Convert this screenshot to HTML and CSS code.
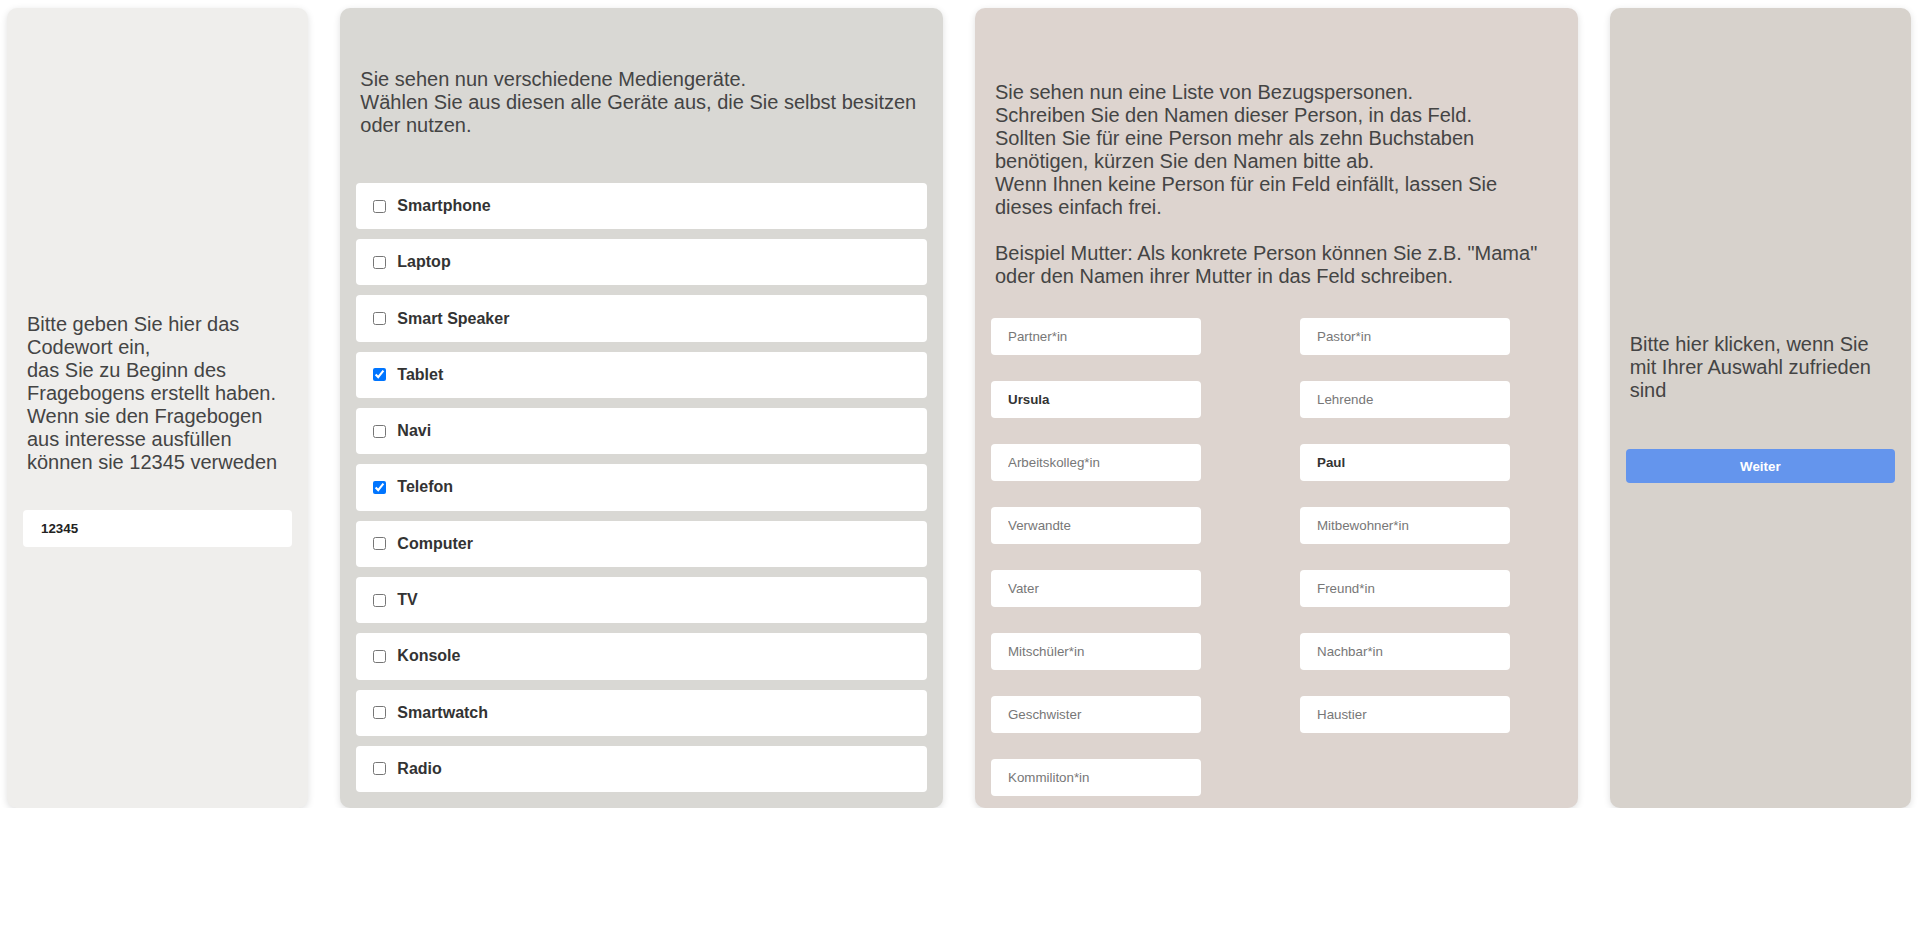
FILE: index.html
```html
<!DOCTYPE html>
<html lang="de">
<head>
<meta charset="utf-8">
<title>Fragebogen</title>
<link rel="stylesheet" href="styles.css">
</head>
<body>
<div class="board">
  <section class="card card-code">
    <p class="prompt">Bitte geben Sie hier das Codewort ein,<br>das Sie zu Beginn des Fragebogens erstellt haben.<br>Wenn sie den Fragebogen aus interesse ausfüllen können sie 12345 verweden</p>
    <input class="field field-code" type="text" value="12345">
  </section>

  <section class="card card-devices">
    <p class="prompt">Sie sehen nun verschiedene Mediengeräte.<br>Wählen Sie aus diesen alle Geräte aus, die Sie selbst besitzen oder nutzen.</p>
    <div class="device-list">
      <label class="device"><input type="checkbox">Smartphone</label>
      <label class="device"><input type="checkbox">Laptop</label>
      <label class="device"><input type="checkbox">Smart Speaker</label>
      <label class="device"><input type="checkbox" checked>Tablet</label>
      <label class="device"><input type="checkbox">Navi</label>
      <label class="device"><input type="checkbox" checked>Telefon</label>
      <label class="device"><input type="checkbox">Computer</label>
      <label class="device"><input type="checkbox">TV</label>
      <label class="device"><input type="checkbox">Konsole</label>
      <label class="device"><input type="checkbox">Smartwatch</label>
      <label class="device"><input type="checkbox">Radio</label>
    </div>
  </section>

  <section class="card card-persons">
    <p class="prompt">Sie sehen nun eine Liste von Bezugspersonen.<br>Schreiben Sie den Namen dieser Person, in das Feld.<br>Sollten Sie für eine Person mehr als zehn Buchstaben benötigen, kürzen Sie den Namen bitte ab.<br>Wenn Ihnen keine Person für ein Feld einfällt, lassen Sie dieses einfach frei.<br><br>Beispiel Mutter: Als konkrete Person können Sie z.B. "Mama" oder den Namen ihrer Mutter in das Feld schreiben.</p>
    <div class="person-grid">
      <input class="field" type="text" placeholder="Partner*in">
      <input class="field" type="text" placeholder="Pastor*in">
      <input class="field" type="text" placeholder="Mutter" value="Ursula">
      <input class="field" type="text" placeholder="Lehrende">
      <input class="field" type="text" placeholder="Arbeitskolleg*in">
      <input class="field" type="text" placeholder="Bruder" value="Paul">
      <input class="field" type="text" placeholder="Verwandte">
      <input class="field" type="text" placeholder="Mitbewohner*in">
      <input class="field" type="text" placeholder="Vater">
      <input class="field" type="text" placeholder="Freund*in">
      <input class="field" type="text" placeholder="Mitschüler*in">
      <input class="field" type="text" placeholder="Nachbar*in">
      <input class="field" type="text" placeholder="Geschwister">
      <input class="field" type="text" placeholder="Haustier">
      <input class="field" type="text" placeholder="Kommiliton*in">
    </div>
  </section>

  <section class="card card-submit">
    <p class="prompt">Bitte hier klicken, wenn Sie mit Ihrer Auswahl zufrieden sind</p>
    <button class="next" type="button">Weiter</button>
  </section>
</div>
</body>
</html>
```

FILE: styles.css
```css
html, body {
  margin: 0;
  background: #ffffff;
}

body {
  font-family: "Liberation Sans", Arial, sans-serif;
  color: #444444;
}

.board {
  display: grid;
  grid-template-columns: minmax(0, 1fr) minmax(0, 2fr) minmax(0, 2fr) minmax(0, 1fr);
  column-gap: 32px;
  padding: 8px 8px 0 7px;
}

.card {
  box-sizing: border-box;
  height: 800px;
  min-width: 0;
  border-radius: 10px;
  box-shadow: 0 2px 7px rgba(0, 0, 0, 0.13);
  display: flex;
  flex-direction: column;
  justify-content: center;
  padding: 44px 16px 0;
}

.card-code { background: #efeeec; }
.card-devices { background: #d9d8d4; }
.card-persons { background: #ddd4cf; padding-top: 61px; }
.card-submit { background: #d7d2cc; padding-top: 0; }

.prompt {
  margin: 0;
  padding: 0 4px;
  max-width: 558px;
  font-size: 20px;
  line-height: 23px;
  color: #444444;
}

.card-code .prompt { margin-bottom: 36px; }
.card-devices .prompt { margin-bottom: 46px; }
.card-persons .prompt { margin-bottom: 30px; }
.card-submit .prompt { margin-bottom: 47px; }

.field {
  box-sizing: border-box;
  height: 37px;
  width: 210px;
  margin: 0;
  border: none;
  border-radius: 4px;
  background: #ffffff;
  padding: 0 17px;
  font-family: "Liberation Sans", Arial, sans-serif;
  font-size: 13.333px;
  font-weight: bold;
  color: #333333;
  outline: none;
}

.field::placeholder {
  color: #777777;
  font-weight: normal;
}

.field-code {
  width: 100%;
  padding-left: 18px;
  color: #222222;
}

.device-list {
  display: flex;
  flex-direction: column;
  gap: 10px;
}

.device {
  box-sizing: border-box;
  height: 46.3px;
  display: flex;
  align-items: center;
  padding-left: 17px;
  background: #ffffff;
  border-radius: 4px;
  font-size: 16px;
  font-weight: bold;
  color: #333333;
}

.device input {
  width: 13px;
  height: 13px;
  margin: 0 11px 0 0;
}

.person-grid {
  display: grid;
  grid-template-columns: 210px 210px;
  column-gap: 99px;
  row-gap: 26px;
}

.next {
  height: 34px;
  width: 100%;
  border: none;
  border-radius: 4px;
  background: #6495ed;
  color: #ffffff;
  font-family: "Liberation Sans", Arial, sans-serif;
  font-size: 13.333px;
  font-weight: bold;
  cursor: pointer;
}
```
